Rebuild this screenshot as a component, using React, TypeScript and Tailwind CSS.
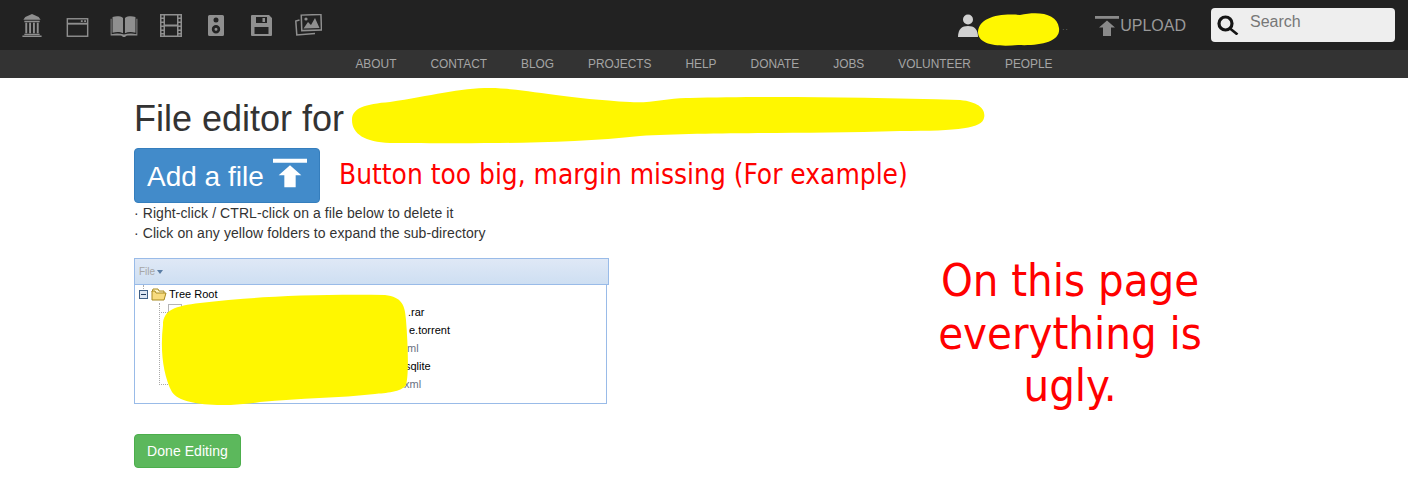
const mainIcons = [
  // museum
  <svg key="museum" width="20" height="23" viewBox="0 0 20 24" fill="currentColor" className="mt-[14px]">
    <path d="M10 0 L17 3 L19 6 L1 6 L3 3 Z" />
    <path d="M2 7h16v1.500H2z M3 9h2v11H3z M7 9h2v11H7z M11 9h2v11h-2z M15 9h2v11h-2z M2 20.500h16V22H2z M0 22.500h20V24H0z" />
  </svg>,
  // browser window
  <svg key="window" width="23" height="19" viewBox="0 0 23 20" fill="none" stroke="currentColor" strokeWidth="1.500" className="ml-[24px] mt-[18px]">
    <rect x="0.800" y="0.800" width="21.400" height="18.400" />
    <path d="M1 6h21" strokeWidth="2" />
    <path d="M15 3.300h2 M18.500 3.300h2" strokeWidth="2" />
  </svg>,
  // open book
  <svg key="book" width="28" height="21" viewBox="0 0 28 22" fill="currentColor" className="ml-[21px] mt-[16px]">
    <path d="M2 1 C6 0 10 0 13 2 V18 C10 16.500 6 16.500 2 17.500 Z" />
    <path d="M26 1 C22 0 18 0 15 2 V18 C18 16.500 22 16.500 26 17.500 Z" />
    <path d="M0 3h1v16c4-1 9-1 13 .500 4-1.500 9-1.500 13-.500V3h1v17.500h-10c-1 0-2 .500-3 1.500h-2c-1-1-2-1.500-3-1.500H0z" />
  </svg>,
  // film strip
  <svg key="film" width="22" height="23" viewBox="0 0 22 23" fill="currentColor" className="ml-[22px] mt-[14px]">
    <path fillRule="evenodd" d="M0 0h22v23H0z M1.500 1.500v2h2v-2z M1.500 5v2.500h2V5z M1.500 9v2.500h2V9z M1.500 13v2.500h2V13z M1.500 17v2h2v-2z M1.500 20.500v1h2v-1z M18.500 1.500v2h2v-2z M18.500 5v2.500h2V5z M18.500 9v2.500h2V9z M18.500 13v2.500h2V13z M18.500 17v2h2v-2z M18.500 20.500v1h2v-1z M5 1.500V10.500h12V1.500z M5 12.500v9h12v-9z" />
  </svg>,
  // speaker
  <svg key="speaker" width="16" height="21" viewBox="0 0 16 21" fill="currentColor" className="ml-[26px] mt-[15px]">
    <path fillRule="evenodd" d="M1.500 0h13A1.500 1.500 0 0 1 16 1.500v18a1.500 1.500 0 0 1-1.500 1.500h-13A1.500 1.500 0 0 1 0 19.500v-18A1.500 1.500 0 0 1 1.500 0z M8 2.500a2.500 2.500 0 1 0 0 5 2.500 2.500 0 0 0 0-5z M8 10a4.200 4.200 0 1 0 0 8.400A4.200 4.200 0 0 0 8 10z M8 12.700a1.500 1.500 0 1 1 0 3 1.500 1.500 0 0 1 0-3z" />
  </svg>,
  // floppy
  <svg key="floppy" width="21" height="21" viewBox="0 0 21 21" fill="currentColor" className="ml-[27px] mt-[15px]">
    <path fillRule="evenodd" d="M1 0h17l3 3v17a1 1 0 0 1-1 1H1a1 1 0 0 1-1-1V1a1 1 0 0 1 1-1z M5 2v6h11V2z M11.500 3h2.500v4h-2.500z M3.500 12v7h14v-7z" />
  </svg>,
  // stacked pictures
  <svg key="pictures" width="27" height="22" viewBox="0 0 27 22" fill="none" stroke="currentColor" className="ml-[23px] mt-[14px]">
    <rect x="6.500" y="0.800" width="19.700" height="15.500" strokeWidth="1.500" transform="rotate(-2 16 8)" />
    <path d="M8.500 14.500 L13 8 L16 11 L20 4 L24.500 14 Z" fill="currentColor" stroke="none" />
    <circle cx="11" cy="5" r="1.600" fill="currentColor" stroke="none" />
    <path d="M4.500 6 L0.800 7 L1.800 21 L20 19.500" strokeWidth="1.500" />
  </svg>,
]

const subLinks = ['About', 'Contact', 'Blog', 'Projects', 'Help', 'Donate', 'Jobs', 'Volunteer', 'People']

// visible ends of the file names, the rest sits under the scribble
const treeRows = [
  { text: '.rar', pad: 'pl-[273px]', color: 'text-black' },
  { text: 'e.torrent', pad: 'pl-[274px]', color: 'text-black' },
  { text: 'ml', pad: 'pl-[272px]', color: 'text-gray-500' },
  { text: 'sqlite', pad: 'pl-[270px]', color: 'text-black' },
  { text: '.xml', pad: 'pl-[266px]', color: 'text-gray-500' },
]

function UploadIcon({ className }: { className: string }) {
  return (
    <svg className={className} viewBox="0 0 24 20" fill="currentColor">
      <path d="M0 0h24v2.800H0z" />
      <path d="M12 4.500 L20 11.500 H16 V20 H8 V11.500 H4 Z" />
    </svg>
  )
}

export default function App() {
  return (
    <div className="relative h-[501px] overflow-hidden bg-white font-['Liberation_Sans',sans-serif] text-[14px] text-[#333]">
      {/* Top bar */}
      <div className="flex h-[50px] bg-[#222] pl-[22px] pr-[13px]">
        <div className="flex items-start text-[#8f8f8f]">{mainIcons}</div>
        <div className="ml-auto flex items-center">
          <svg width="20" height="23" viewBox="0 0 20 23" fill="#d0d0d0">
            <circle cx="10" cy="5.500" r="5" />
            <path d="M0 23 C0 15 4 12 10 12 C16 12 20 15 20 23 Z" />
          </svg>
          <span className="ml-[84px] mr-[29px] mt-[5px] w-[4px] text-[8px] leading-none tracking-[1px] text-[#777]">..</span>
          <UploadIcon className="mt-[2px] h-[20px] w-[24px] text-[#8a8a8a]" />
          <span className="ml-[1px] mt-[2px] text-[16px] text-[#999]">UPLOAD</span>
          <div className="ml-[25px] flex h-[34px] w-[184px] rounded-[4px] bg-[#eee] pl-[6px] pr-2">
            <svg width="22" height="20" viewBox="0 0 22 20" fill="none" stroke="#151515" className="mt-[7px]">
              <circle cx="8.500" cy="8.500" r="6.500" strokeWidth="3.200" />
              <path d="M13 13.500 L20.500 19.500" strokeWidth="2.600" />
            </svg>
            <span className="ml-[11px] mt-[5px] text-[16px] leading-[18px] text-[#777]">Search</span>
          </div>
        </div>
      </div>

      {/* Sub nav */}
      <div className="flex h-[28px] items-center justify-center gap-[34px] bg-[#333] pt-[1px] text-[11.900px] uppercase text-[#a5a5a5]">
        {subLinks.map((link) => (
          <span key={link}>{link}</span>
        ))}
      </div>

      {/* Page content */}
      <div className="flex pl-[134px]">
        <div className="w-[475px] shrink-0">
          <h1 className="mt-[21px] h-[49px] whitespace-nowrap text-[36px] leading-[40px]">File editor for</h1>

          <div className="flex items-center whitespace-nowrap">
            <button className="flex h-[55px] w-[186px] shrink-0 rounded-[4px] border border-[#357ebd] bg-[#428bca] pl-3 text-[28px] text-white">
              <span className="mt-[10px] leading-[36px]">Add a file</span>
              <UploadIcon className="ml-[9px] mt-[9px] h-[30px] w-[34px]" />
            </button>
            <span className="ml-[19px] mb-[2px] font-['DejaVu_Sans',sans-serif] font-stretch-condensed text-[27.800px] text-[#f00]">
              Button too big, margin missing (For example)
            </span>
          </div>

          <p className="tracking-[0.080px] leading-[20px]">· Right-click / CTRL-click on a file below to delete it</p>
          <p className="tracking-[0.080px] leading-[20px]">· Click on any yellow folders to expand the sub-directory</p>

          {/* File tree */}
          <div className="mt-[15px] flex h-[27px] items-center border border-[#99bbe8] bg-gradient-to-b from-[#dfe8f6] to-[#cedff2] pl-1 text-[10px] text-[#a6a6a6]">
            File
            <span className="ml-[2px] mt-[1px] border-x-[3px] border-t-[4px] border-x-transparent border-t-[#5b7ea6]" />
          </div>
          <div className="relative h-[119px] w-[473px] border border-t-0 border-[#99bbe8] text-[11px]">
            <div className="flex h-[18px] items-center pl-[4px] text-black">
              <span className="flex h-[9px] w-[9px] items-center justify-center border border-[#3f5f85] bg-[#dde6f2]">
                <span className="h-px w-[5px] bg-[#1f3a5c]" />
              </span>
              <svg width="16" height="13" viewBox="0 0 16 13" className="ml-[3px]">
                <path d="M1 4 L2 1 L7 1 L8 3 L13 3 L13 5" fill="#fff3bf" stroke="#a88a20" />
                <path d="M1 3 L1 12 L13 12 L15 5 L5 5 L4 3 Z" fill="#f8dc80" stroke="#a88a20" />
              </svg>
              <span className="ml-[2px]">Tree Root</span>
            </div>
            {/* dotted guides */}
            <div className="absolute left-[8px] top-0 h-[4px] border-l border-dotted border-[#aaa]" />
            <div className="absolute left-[24px] top-[18px] h-[82px] w-[9px] border-b border-l border-dotted border-[#aaa]" />
            <div className="absolute left-[24px] top-[27px] w-[9px] border-t border-dotted border-[#aaa]" />
            <div className="absolute left-[33px] top-[19px] h-[16px] w-[14px] border border-[#b5b5b5]" />
            {treeRows.map((row) => (
              <div key={row.text} className={`flex h-[18px] items-center ${row.pad} ${row.color}`}>
                {row.text}
              </div>
            ))}
          </div>

          <button className="mt-[30px] h-[34px] w-[107px] rounded-[4px] border border-[#4cae4c] bg-[#5cb85c] text-[14px] tracking-[0.050px] text-white">
            Done Editing
          </button>
        </div>

        <p className="ml-[311px] mt-[177px] w-[300px] text-center font-['DejaVu_Sans',sans-serif] font-stretch-condensed text-[45px] leading-[52.500px] text-[#f00]">
          On this page everything is ugly.
        </p>
      </div>

      {/* Yellow scribbles painted over the page */}
      <svg className="pointer-events-none absolute left-0 top-0 blur-[0.700px]" width="1408" height="501" viewBox="0 0 1408 501" fill="#fff700">
        <path d="M978 32 C979 18 998 13 1020 15 C1040 11 1057 14 1059 28 C1061 42 1040 46 1018 45 C998 47 978 45 978 32 Z" />
        <path d="M352 120 C352 108 365 104 390 102 C430 96 460 88 490 88 C520 88 560 98 630 102 C650 104 670 97 690 98 C760 96 860 97 960 100 C980 102 986 110 984 118 C982 128 960 131 900 131 C800 134 700 132 640 136 C560 145 450 143 390 143 C365 142 352 134 352 120 Z" />
        <path d="M163 325 C163 310 175 306 200 303 C250 297 310 294 385 295 C402 297 405 305 406 320 C408 345 409 375 406 385 C402 392 385 393 375 394 C340 398 300 398 260 402 C220 408 180 405 172 392 C163 375 160 350 163 325 Z" />
      </svg>
    </div>
  )
}
